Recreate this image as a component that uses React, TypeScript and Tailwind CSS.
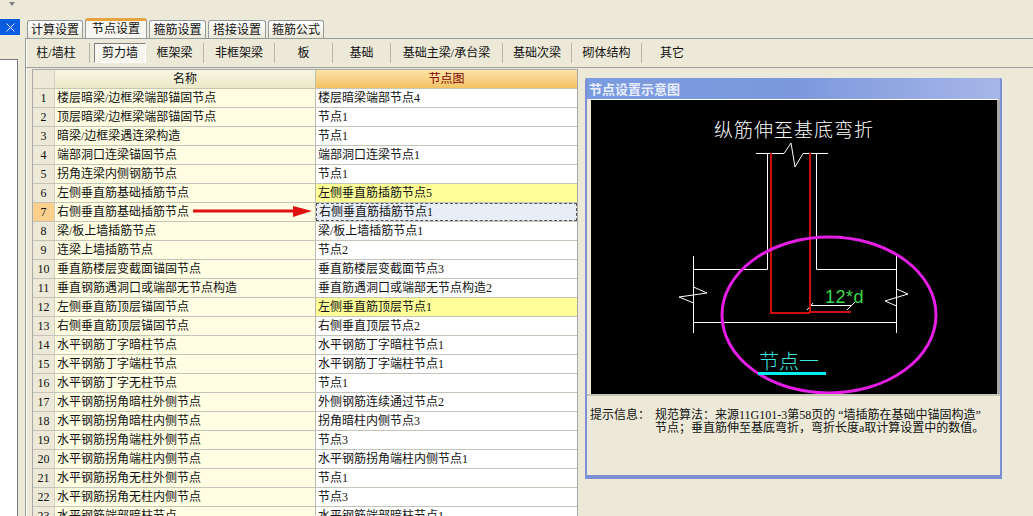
const tabs = [
  { label: "计算设置", w: "w-[56px]" },
  { label: "节点设置", w: "w-[62px]", active: true },
  { label: "箍筋设置", w: "w-[57px]" },
  { label: "搭接设置", w: "w-[58px]" },
  { label: "箍筋公式", w: "w-[56px]" },
];

const subTabs = [
  { label: "柱/墙柱", w: "w-[64px] pr-[3px]" },
  { label: "剪力墙", w: "w-[52px]", active: true },
  { label: "框架梁", w: "w-[58px]" },
  { label: "非框架梁", w: "w-[71px]" },
  { label: "板", w: "w-[58px]" },
  { label: "基础", w: "w-[58px]" },
  { label: "基础主梁/承台梁", w: "w-[112px]" },
  { label: "基础次梁", w: "w-[69px]" },
  { label: "砌体结构", w: "w-[70px]" },
  { label: "其它", w: "w-[60px]" },
];

const rows = [
  ["楼层暗梁/边框梁端部锚固节点", "楼层暗梁端部节点4"],
  ["顶层暗梁/边框梁端部锚固节点", "节点1"],
  ["暗梁/边框梁遇连梁构造", "节点1"],
  ["端部洞口连梁锚固节点", "端部洞口连梁节点1"],
  ["拐角连梁内侧钢筋节点", "节点1"],
  ["左侧垂直筋基础插筋节点", "左侧垂直筋插筋节点5"],
  ["右侧垂直筋基础插筋节点", "右侧垂直筋插筋节点1"],
  ["梁/板上墙插筋节点", "梁/板上墙插筋节点1"],
  ["连梁上墙插筋节点", "节点2"],
  ["垂直筋楼层变截面锚固节点", "垂直筋楼层变截面节点3"],
  ["垂直钢筋遇洞口或端部无节点构造", "垂直筋遇洞口或端部无节点构造2"],
  ["左侧垂直筋顶层锚固节点", "左侧垂直筋顶层节点1"],
  ["右侧垂直筋顶层锚固节点", "右侧垂直顶层节点2"],
  ["水平钢筋丁字暗柱节点", "水平钢筋丁字暗柱节点1"],
  ["水平钢筋丁字端柱节点", "水平钢筋丁字端柱节点1"],
  ["水平钢筋丁字无柱节点", "节点1"],
  ["水平钢筋拐角暗柱外侧节点", "外侧钢筋连续通过节点2"],
  ["水平钢筋拐角暗柱内侧节点", "拐角暗柱内侧节点3"],
  ["水平钢筋拐角端柱外侧节点", "节点3"],
  ["水平钢筋拐角端柱内侧节点", "水平钢筋拐角端柱内侧节点1"],
  ["水平钢筋拐角无柱外侧节点", "节点1"],
  ["水平钢筋拐角无柱内侧节点", "节点3"],
  ["水平钢筋端部暗柱节点", "水平钢筋端部暗柱节点1"],
];

function Diagram() {
  return (
    <svg width="406" height="294" viewBox="591 100 406 294" className="block bg-black">
      <text x="714" y="137" fill="#fff" fontSize="19" letterSpacing="1" fontFamily="'Noto Sans CJK SC', sans-serif" fontWeight="300">
        纵筋伸至基底弯折
      </text>
      <g stroke="#fff" strokeWidth="1" fill="none">
        <path d="M756 153.500H784L791 143L795 167L803 153.500H828" />
        <path d="M767.500 153V269.500H693.500M816.500 153V269.500H896.500" />
        <path d="M693.500 256V333M896.500 256V333M693.500 322.500H896.500" />
        <path d="M693.500 287L707 293L679 297L693.500 303" />
        <path d="M896.500 289L908 294L885 301L896.500 306" />
        <path d="M810 305.500H852M807 310L813 303M847 310L855 302" />
      </g>
      <g stroke="#d01010" strokeWidth="2" fill="none">
        <path d="M771 153V313H810" />
        <path d="M810 153V312H851" />
      </g>
      <text x="825" y="303" fill="#3ad84a" fontSize="18" fontFamily="'Liberation Sans', sans-serif" letterSpacing="0.5">
        12*d
      </text>
      <ellipse cx="829" cy="315" rx="107" ry="78" fill="none" stroke="#e41ee4" strokeWidth="3" />
      <text x="759" y="369" fill="#3fe6e0" fontSize="20" fontFamily="'Noto Sans CJK SC', sans-serif" fontWeight="300">
        节点一
      </text>
      <rect x="758" y="372" width="68" height="3" fill="#00f0f0" />
    </svg>
  );
}

function Arrow() {
  return (
    <svg width="120" height="12" viewBox="0 0 120 12" className="absolute left-[193px] top-[205px]">
      <path d="M0 4.500H100V7.500H0Z" fill="#e01010" />
      <path d="M100 1L119 6L100 12Z" fill="#e01010" />
    </svg>
  );
}

export default function App() {
  return (
    <div className="relative flex h-[516px] w-[1033px] overflow-hidden bg-[#ece9d8] font-['Liberation_Serif','Noto_Sans_CJK_SC',serif] text-[12px] leading-none text-[#111]">
      {/* left dock */}
      <div className="w-[25px] shrink-0">
        <div className="flex h-[19px] items-start pl-[9px] pt-[2px]">
          <div className="h-0 w-0 border-x-[3px] border-t-[4px] border-x-transparent border-t-[#808080]" />
        </div>
        <div className="flex h-[16px] w-[20px] items-center justify-center bg-[#0a5ce0]">
          <svg width="9" height="9" viewBox="0 0 9 9">
            <path d="M0.500 0.500L8.500 8.500M8.500 0.500L0.500 8.500" stroke="#dfe8ff" strokeWidth="1" fill="none" />
          </svg>
        </div>
        <div className="mt-[24px] h-[457px] w-[18px] border-r border-t border-[#7a7a7a] bg-white" />
      </div>

      {/* main */}
      <div className="flex min-w-0 flex-1 flex-col">
        <div className="h-[18px] shrink-0" />
        <div className="relative z-10 flex h-[20px] shrink-0 items-end gap-[2px] pl-[2px]">
          {tabs.map((t) => (
            <div
              key={t.label}
              className={
                t.active
                  ? `${t.w} flex h-[20px] items-center justify-center rounded-t-[3px] border-x border-t-[3px] border-x-[#919b9c] border-t-[#e8a33c] bg-[#f7f6f0] pb-[2px]`
                  : `${t.w} flex h-[18px] items-center justify-center rounded-t-[3px] border-x border-t border-[#919b9c] bg-gradient-to-b from-white to-[#ece9d8]`
              }
            >
              {t.label}
            </div>
          ))}
        </div>
        <div className="flex min-h-0 flex-1 flex-col border-l border-t border-[#919b9c] shadow-[inset_1px_0_0_#fff]">
          <div className="flex h-[29px] shrink-0 items-center border-b border-[#a0a0a0]">
            {subTabs.map((s, i) => (
              <div
                key={s.label}
                className={
                  s.active
                    ? `${s.w} ml-[4px] flex h-[20px] items-center justify-center border border-b-white border-l-[#808080] border-r-white border-t-[#808080] bg-[#f6f5ee]`
                    : `${s.w} flex h-[20px] items-center justify-center ${i === 9 ? "" : "border-r border-[#b8b6a6]"}`
                }
              >
                {s.label}
              </div>
            ))}
          </div>

          <div className="flex min-h-0 flex-1 pl-[6px] pt-[1px]">
            <div className="w-[546px] shrink-0 border-l border-t border-r border-[#a8a8a8]">
              <div className="flex h-[19px] border-b border-[#c8c6b0] text-[12px]">
                <div className="w-[22px] border-r border-[#d0cfc0] bg-[#ece9d8]" />
                <div className="flex w-[261px] items-center justify-center border-r border-[#c0bfa8] bg-gradient-to-b from-[#f9f7e4] to-[#ebe7c8]">名称</div>
                <div className="flex flex-1 items-center justify-center bg-gradient-to-b from-[#fbe3a6] to-[#f5c264] text-[#800000]">节点图</div>
              </div>
              {rows.map(([name, value], i) => {
                const highlight = i === 5 || i === 11;
                const selected = i === 6;
                return (
                  <div key={i} className="flex h-[19px] border-b border-[#c4c4b8]">
                    <div className={`flex w-[22px] items-center justify-center border-r border-[#d0cfc0] ${selected ? "bg-[#fbd08c]" : "bg-[#ece9d8]"}`}>
                      {i + 1}
                    </div>
                    <div className="flex w-[261px] items-center border-r border-[#bcbcb0] bg-[#fffde2] pl-[2px]">{name}</div>
                    <div
                      className={`flex flex-1 items-center pl-[2px] ${
                        highlight ? "bg-[#ffff99]" : selected ? "border border-dashed border-[#555] bg-[#e8eef8] pl-[1px]" : "bg-white"
                      }`}
                    >
                      {value}
                    </div>
                  </div>
                );
              })}
            </div>

            {/* diagram panel */}
            <div className="ml-[7px] mt-[9px] h-[401px] w-[417px] shrink-0 rounded-t-[2px] border-x-[2px] border-b-[4px] border-x-[#7d8fd4] border-b-[#7d8fd4] bg-[#ece9d8]">
              <div className="flex h-[21px] items-center bg-gradient-to-r from-[#7b9be0] via-[#7b98dc] to-[#a8b6e8] pl-[2px] pt-[1px] text-[13px] font-bold text-[#e8eeff]">
                节点设置示意图
              </div>
              <div className="border-l-[4px] border-r-[3px] border-t-[1px] border-l-[#ece9d8] border-r-[#a8a8a8] border-t-white">
                <Diagram />
              </div>
              <div className="flex border-t-[2px] border-[#c8c6b8] pl-[3px] pt-[13px] leading-[13px]">
                <div className="w-[65px] shrink-0">提示信息：</div>
                <div className="whitespace-nowrap">
                  <div>规范算法：来源11G101-3第58页的 “墙插筋在基础中锚固构造”</div>
                  <div>节点；垂直筋伸至基底弯折，弯折长度a取计算设置中的数值。</div>
                </div>
              </div>
            </div>
          </div>
        </div>
      </div>

      <Arrow />
    </div>
  );
}
